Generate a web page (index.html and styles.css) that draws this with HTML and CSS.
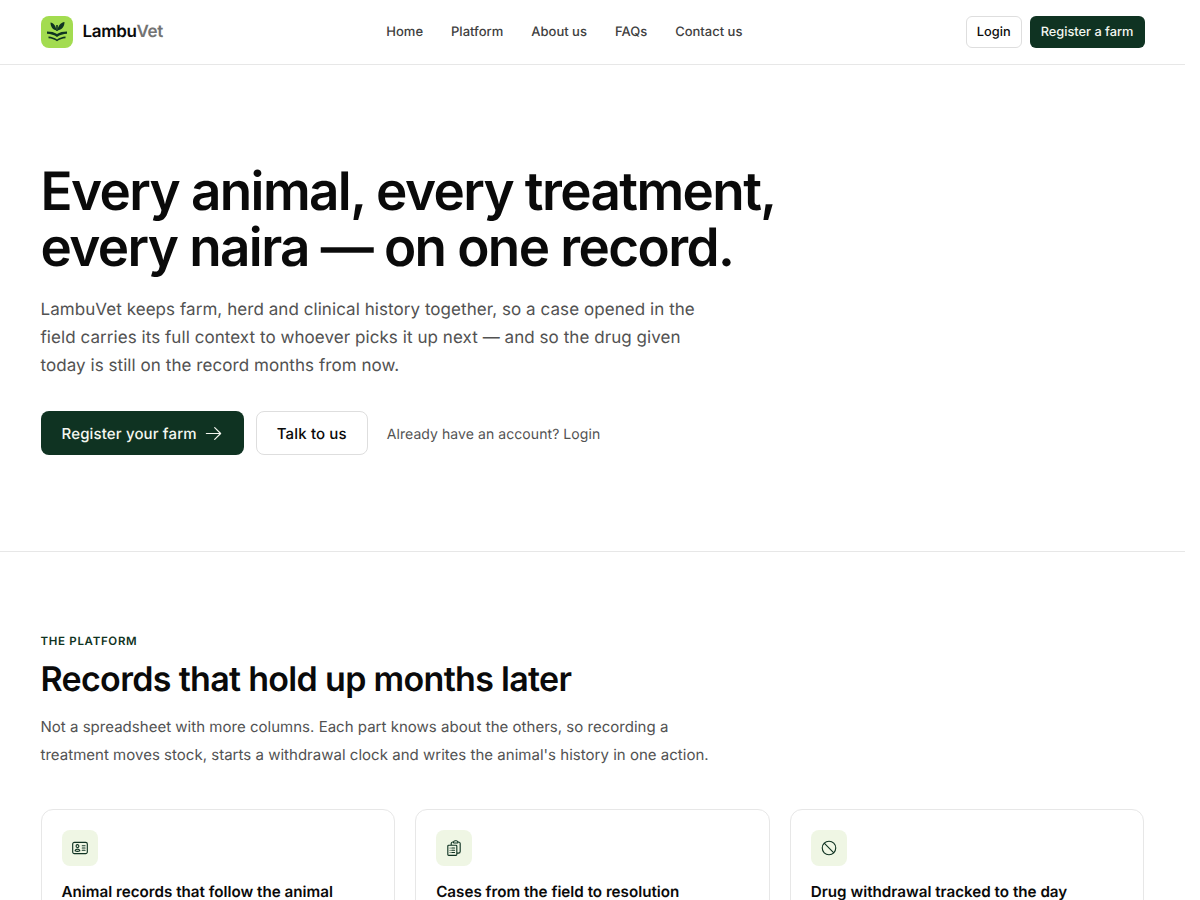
FILE: index.html
```html
<!DOCTYPE html>
<html lang="en">
<head>
<meta charset="utf-8">
<title>LambuVet</title>
<link rel="stylesheet" href="styles.css">
</head>
<body>
<header class="topbar">
  <div class="wrap topbar-inner">
    <a class="brand" href="#">
      <span class="brand-mark">
        <svg viewBox="0 0 24 24" width="24" height="24" fill="#0f3322"><path d="M11.200 5h1.600v6h-1.600z"/><path d="M11.500 10.500C11 6 8.500 3 5.500 2.500 5.500 6.500 7.500 9.800 11.500 10.500zM12.500 10.500C13 6 15.500 2.500 19.500 2 19.500 6.500 17 9.800 12.500 10.500z"/><path d="M2 11.500C6 11.500 9.500 12.300 12 14 14.500 12.300 18 11.500 22 11.500V13.800C18 13.900 15 15 12 17 9 15 6 13.900 2 13.800z"/><path d="M3.500 16.500c3 .2 6 1.200 8.500 3 2.500-1.800 5.500-2.800 8.500-3v1.800c-3.200.3-6 1.300-8.500 3-2.500-1.700-5.300-2.700-8.500-3z"/></svg>
      </span>
      <span class="brand-name">Lambu<span class="brand-muted">Vet</span></span>
    </a>
    <nav class="nav">
      <a href="#">Home</a><a href="#">Platform</a><a href="#">About us</a><a href="#">FAQs</a><a href="#">Contact us</a>
    </nav>
    <div class="top-actions">
      <a class="btn btn-outline btn-sm" href="#">Login</a>
      <a class="btn btn-dark btn-sm" href="#">Register a farm</a>
    </div>
  </div>
</header>
<main>
  <section class="hero">
    <div class="wrap">
      <h1>Every animal, every treatment,<br>every naira — on one record.</h1>
      <p class="lead">LambuVet keeps farm, herd and clinical history together, so a case opened in the field carries its full context to whoever picks it up next — and so the drug given today is still on the record months from now.</p>
      <div class="hero-actions">
        <a class="btn btn-dark btn-lg" href="#">Register your farm
          <svg viewBox="0 0 24 24" width="19" height="19" fill="none" stroke="currentColor" stroke-width="1.500" stroke-linecap="round" stroke-linejoin="round" class="arrow"><path d="M13.500 4.500 21 12m0 0-7.500 7.500M21 12H3"/></svg>
        </a>
        <a class="btn btn-outline btn-lg" href="#">Talk to us</a>
        <span class="hero-note">Already have an account? Login</span>
      </div>
    </div>
  </section>
  <section class="platform">
    <div class="wrap">
      <div class="eyebrow">THE PLATFORM</div>
      <h2>Records that hold up months later</h2>
      <p class="section-lead">Not a spreadsheet with more columns. Each part knows about the others, so recording a treatment moves stock, starts a withdrawal clock and writes the animal's history in one action.</p>
      <div class="cards">
        <article class="card">
          <span class="card-icon">
            <svg viewBox="0 0 24 24" width="18" height="18" fill="none" stroke="currentColor" stroke-width="1.500" stroke-linecap="round" stroke-linejoin="round"><path d="M15 9h3.750M15 12h3.750M15 15h3.750M4.500 19.500h15a2.250 2.250 0 0 0 2.250-2.250V6.750A2.250 2.250 0 0 0 19.500 4.500h-15a2.250 2.250 0 0 0-2.250 2.250v10.500A2.250 2.250 0 0 0 4.500 19.500Zm6-10.125a1.875 1.875 0 1 1-3.750 0 1.875 1.875 0 0 1 3.750 0Zm1.294 6.336a6.721 6.721 0 0 1-3.170.789 6.721 6.721 0 0 1-3.168-.789 3.376 3.376 0 0 1 6.338 0Z"/></svg>
          </span>
          <h3>Animal records that follow the animal</h3>
        </article>
        <article class="card">
          <span class="card-icon">
            <svg viewBox="0 0 24 24" width="18" height="18" fill="none" stroke="currentColor" stroke-width="1.500" stroke-linecap="round" stroke-linejoin="round"><path d="M9 12h3.750M9 15h3.750M9 18h3.750m3 .75H18a2.250 2.250 0 0 0 2.250-2.250V6.108c0-1.135-.845-2.098-1.976-2.192a48.424 48.424 0 0 0-1.123-.08m-5.801 0c-.065.21-.1.433-.1.664 0 .414.336.75.75.75h4.500a.75.75 0 0 0 .75-.75 2.250 2.250 0 0 0-.1-.664m-5.800 0A2.251 2.251 0 0 1 13.500 2.250H15c1.012 0 1.867.668 2.150 1.586m-5.800 0c-.376.023-.75.05-1.124.08C9.095 4.010 8.250 4.973 8.250 6.108V8.250m0 0H4.875c-.621 0-1.125.504-1.125 1.125v11.250c0 .621.504 1.125 1.125 1.125h9.750c.621 0 1.125-.504 1.125-1.125V9.375c0-.621-.504-1.125-1.125-1.125H8.250ZM6.750 12h.008v.008H6.750V12Zm0 3h.008v.008H6.750V15Zm0 3h.008v.008H6.750V18Z"/></svg>
          </span>
          <h3>Cases from the field to resolution</h3>
        </article>
        <article class="card">
          <span class="card-icon">
            <svg viewBox="0 0 24 24" width="18" height="18" fill="none" stroke="currentColor" stroke-width="1.500" stroke-linecap="round" stroke-linejoin="round"><path d="M18.364 18.364A9 9 0 0 0 5.636 5.636m12.728 12.728A9 9 0 0 1 5.636 5.636m12.728 12.728L5.636 5.636"/></svg>
          </span>
          <h3>Drug withdrawal tracked to the day</h3>
        </article>
      </div>
    </div>
  </section>
</main>
</body>
</html>
```
FILE: styles.css
```css
* { box-sizing: border-box; }
body { margin: 0; width: 1185px; background: #fff; color: #0a0a0a; font-family: Inter, "Liberation Sans", sans-serif; text-rendering: geometricPrecision; }
a { color: inherit; text-decoration: none; }
.wrap { width: 1104px; margin: 0 auto; }
.topbar { height: 65px; border-bottom: 1px solid #e7e7e7; }
.topbar-inner { height: 64px; display: flex; justify-content: space-between; align-items: center; }
.brand { display: flex; align-items: center; gap: 10px; }
.brand-mark { width: 32px; height: 32px; border-radius: 8px; background: #a3dc50; display: flex; align-items: center; justify-content: center; }
.brand-name { font-size: 17px; font-weight: 600; letter-spacing: -0.34px; }
.brand-muted { color: #737373; }
.nav { display: flex; gap: 28px; font-size: 13px; font-weight: 500; color: #404040; }
.top-actions { display: flex; gap: 8px; }
.btn { display: inline-flex; align-items: center; justify-content: center; border-radius: 6px; font-weight: 500; border: 1px solid transparent; }
.btn-sm { height: 32px; padding: 0 10px; font-size: 12.8px; }
.btn-lg { height: 44px; padding: 0 20px; font-size: 15px; letter-spacing: 0.15px; border-radius: 8px; }
.btn-dark { background: #0f3322; color: #f4f7f0; }
.btn-outline { background: #fff; border-color: #dedede; color: #0a0a0a; }
.arrow { margin-left: 7px; }
.hero { padding: 98px 0 0; border-bottom: 1px solid #e7e7e7; height: 487px; }
h1 { margin: 0; font-size: 53px; line-height: 56px; font-weight: 600; letter-spacing: -1.59px; }
.lead { margin: 21px 0 0; max-width: 680px; font-size: 17px; line-height: 28px; letter-spacing: 0.06px; color: #525252; }
.hero-actions { margin-top: 31px; display: flex; align-items: center; gap: 12px; }
.hero-note { margin-left: 7px; padding-top: 2px; font-size: 14px; letter-spacing: 0.07px; color: #525252; }
.platform { padding: 80px 0 0; }
.eyebrow { font-size: 11.5px; font-weight: 600; letter-spacing: 0.69px; color: #0f3322; line-height: 18px; }
h2 { margin: 9px 0 0; font-size: 34px; line-height: 42px; font-weight: 600; letter-spacing: -0.68px; }
.section-lead { margin: 12px 0 0; max-width: 680px; font-size: 15px; line-height: 28px; letter-spacing: 0.02px; color: #525252; }
.cards { margin-top: 40px; display: grid; grid-template-columns: repeat(3, 1fr); gap: 20px; }
.card { border: 1px solid #e7e7e7; border-radius: 12px; padding: 20px; height: 200px; }
.card-icon { width: 36px; height: 36px; border-radius: 8px; background: #eff6e4; color: #0f3322; display: flex; align-items: center; justify-content: center; }
h3 { margin: 15px 0 0; font-size: 15.2px; line-height: 22px; font-weight: 600; }
```
